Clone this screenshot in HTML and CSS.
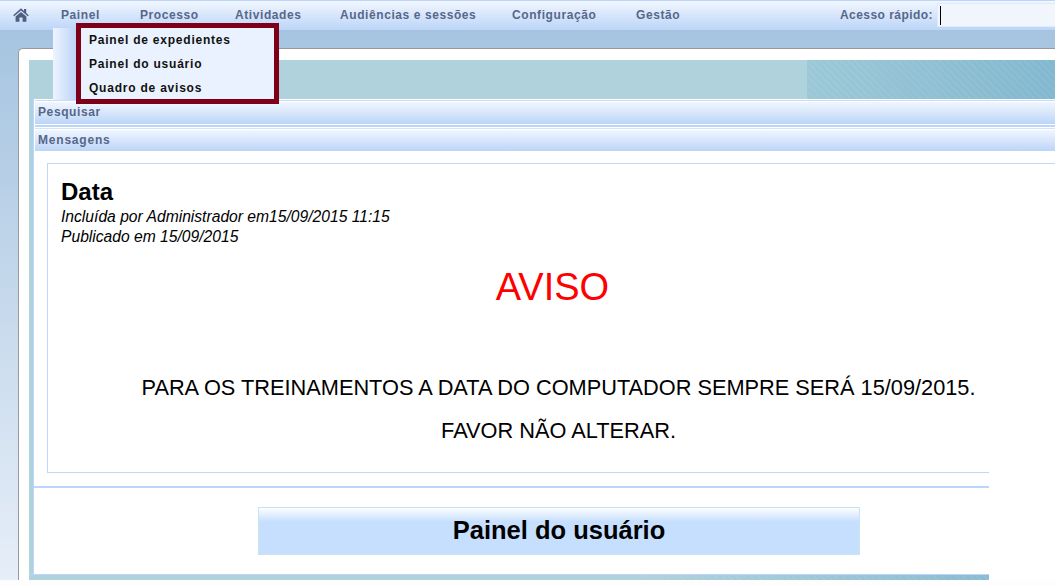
FILE: index.html
```html
<!DOCTYPE html>
<html lang="pt-BR">
<head>
<meta charset="utf-8">
<title>Painel do usuário</title>
<link rel="stylesheet" href="styles.css">
</head>
<body>
<nav class="topbar">
  <a class="home" aria-label="Início">
    <svg viewBox="0 0 16 14" width="16" height="14"><path d="M8 0.3 0.2 7.2 1.2 8.3 8 2.4 14.8 8.3 15.8 7.2 13.2 4.9V1H11V3L8 0.3ZM2.6 8.6V13.7H6.4V9.6H9.6V13.7H13.4V8.6L8 3.9 2.6 8.6Z" fill="#4f5f80"/></svg>
  </a>
  <ul class="menu">
    <li class="m-painel">Painel</li>
    <li class="m-processo">Processo</li>
    <li class="m-atividades">Atividades</li>
    <li class="m-audiencias">Audiências e sessões</li>
    <li class="m-config">Configuração</li>
    <li class="m-gestao">Gestão</li>
  </ul>
  <div class="quick">
    <label class="quick-label">Acesso rápido:</label>
    <div class="quick-input"><span class="caret"></span></div>
  </div>
</nav>

<div class="dropdown">
  <div class="dropdown-side"></div>
  <ul class="dropdown-list">
    <li>Painel de expedientes</li>
    <li>Painel do usuário</li>
    <li>Quadro de avisos</li>
  </ul>
</div>

<main class="stage">
  <div class="frame">
    <div class="teal">
      <div class="banner"><div class="banner-pattern"></div></div>
      <div class="panel-head head-search">Pesquisar</div>
      <div class="panel-head head-msg">Mensagens</div>
      <div class="content">
        <section class="notice">
          <h1 class="notice-title">Data</h1>
          <p class="notice-meta">Incluída por Administrador em15/09/2015 11:15</p>
          <p class="notice-meta">Publicado em 15/09/2015</p>
          <p class="aviso">AVISO</p>
          <p class="line line-1">PARA OS TREINAMENTOS A DATA DO COMPUTADOR SEMPRE SERÁ 15/09/2015.</p>
          <p class="line line-2">FAVOR NÃO ALTERAR.</p>
        </section>
        <div class="rule"></div>
        <div class="title-wrap"><h2 class="page-title">Painel do usuário</h2></div>
      </div>
      <div class="foot-strip"><div class="foot-pattern"></div></div>
    </div>
  </div>
</main>
</body>
</html>
```
FILE: styles.css
```css
* { box-sizing: border-box; }
html, body { margin: 0; padding: 0; }
body {
  width: 1055px;
  height: 586px;
  overflow: hidden;
  position: relative;
  background: #fdfdfd;
  font-family: "Liberation Sans", Arial, sans-serif;
}
ul { list-style: none; margin: 0; padding: 0; }
p, h1, h2 { margin: 0; }

.topbar {
  height: 30px;
  display: flex;
  align-items: center;
  border-top: 1px solid #bcd6fb;
  background: linear-gradient(#f1f6fe, #bcd5f8);
  position: relative;
}
.home { width: 61px; padding-left: 13px; display: flex; margin-top: -2px; }
.menu {
  display: flex;
  font-size: 12px;
  font-weight: bold;
  letter-spacing: 0.58px;
  color: #56678a;
  margin-top: -2px;
}
.menu li { white-space: nowrap; }
.m-painel { width: 79px; }
.m-processo { width: 95px; }
.m-atividades { width: 105px; }
.m-audiencias { width: 172px; }
.m-config { width: 124px; }
.m-gestao { width: 60px; }
.quick { margin-left: auto; display: flex; align-items: center; margin-top: -2px; }
.quick-label {
  font-size: 12px;
  font-weight: bold;
  letter-spacing: 0.45px;
  color: #56678a;
  margin-right: 4px;
}
.quick-input {
  width: 118px;
  height: 24px;
  margin-top: 1px;
  background: #f0f6fc;
  border: 1px solid #dfeafa;
  border-right: 0;
  padding: 2px 0 0 2px;
}
.caret { display: block; width: 1px; height: 19px; background: #000; }

.dropdown {
  position: absolute;
  left: 53px;
  top: 23px;
  display: flex;
  align-items: flex-start;
  z-index: 5;
}
.dropdown-side {
  width: 23px;
  height: 72px;
  margin-top: 5px;
  background: linear-gradient(90deg, #eef4fe, #bcd5f8);
}
.dropdown-list {
  width: 203px;
  height: 81px;
  border: 5px solid #7e0018;
  background: #e9f2fe;
  font-size: 12px;
  font-weight: bold;
  letter-spacing: 0.78px;
  color: #111;
  padding: 5px 0 0 8px;
}
.dropdown-list li { height: 24px; line-height: 15px; }

.stage {
  height: 550px;
  padding: 18px 0 0 18px;
  background: linear-gradient(#a6c4e0, #e6eef8);
}
.frame {
  height: 532px;
  width: 1037px;
  background: #fff;
  border-top: 1px solid #999;
  border-left: 1px solid #999;
  border-top-left-radius: 5px;
  padding: 11px 0 0 10px;
}
.teal {
  width: 1026px;
  height: 520px;
  background: linear-gradient(90deg, #b0d2dc 4px, #bcd6fb 4px 5px, #fff 5px);
  padding-left: 5px;
}
.banner {
  height: 39px;
  margin-left: -5px;
  display: flex;
  justify-content: flex-end;
  background: #b0d2dc;
}
.banner-pattern {
  width: 248px;
  height: 39px;
  background:
    repeating-linear-gradient(45deg, rgba(255,255,255,0.05) 0 2px, rgba(255,255,255,0) 2px 5px),
    linear-gradient(90deg, #9cc8d6, #82b8d0);
}
.panel-head {
  border-left: 1px solid #fff;
  font-size: 12px;
  font-weight: bold;
  letter-spacing: 0.6px;
  color: #56678a;
  padding-left: 3px;
  line-height: 15px;
}
.head-search {
  height: 25px;
  margin-top: 1px;
  padding-top: 5px;
  background: linear-gradient(#c6dcfa 0 1px, #fff 1px 2px, #f1f6fe 2px, #bcd5f8 24px, #fff 24px);
}
.head-msg {
  height: 26px;
  padding-top: 8px;
  letter-spacing: 0.8px;
  background: linear-gradient(#bcd6fb 0 2px, #fff 2px 3px, #d2e2fa 3px 4px, #fff 4px 5px, #f1f6fe 5px, #bcd5f8 100%);
}

.content {
  width: 1021px;
  height: 423px;
  padding-top: 12px;
}
.notice {
  width: 1008px;
  height: 310px;
  margin-left: 13px;
  border-top: 1px solid #c0d8f8;
  border-left: 1px solid #c0d8f8;
  padding: 15px 0 0 13px;
  position: relative;
  color: #000;
}
.notice::after {
  content: "";
  position: absolute;
  left: -1px;
  bottom: 0;
  width: 942px;
  height: 1px;
  background: #c0d8f8;
}
.notice-title { font-size: 24px; font-weight: bold; line-height: 26px; margin-bottom: 2px; }
.notice-meta { font-size: 15.65px; font-style: italic; line-height: 20px; }
.aviso {
  font-size: 38px;
  color: #ff0000;
  line-height: 44px;
  margin-top: 18px;
  width: 983px;
  text-align: center;
}
.line {
  font-size: 21.75px;
  line-height: 24px;
  text-align: center;
  width: 995px;
}
.line-1 { margin-top: 67px; }
.line-2 { margin-top: 19px; }
.rule { height: 2px; width: 955px; background: #bcd6fb; margin-top: 13px; }
.title-wrap {
  width: 955px;
  display: flex;
  padding: 19px 0 0 224px;
}
.page-title {
  width: 602px;
  height: 48px;
  border: 1px solid #c8e4ee;
  background: linear-gradient(#fdfeff 0, #c6dffe 14px);
  font-size: 25.5px;
  font-weight: bold;
  line-height: 44px;
  text-align: center;
  color: #000;
}
.foot-strip {
  width: 960px;
  height: 6px;
  margin-left: -5px;
  border-top: 1px solid #bcd6fb;
  background: #b0d2dc;
  display: flex;
  justify-content: flex-end;
}
.foot-pattern {
  width: 349px;
  background:
    repeating-linear-gradient(45deg, rgba(255,255,255,0.05) 0 2px, rgba(255,255,255,0) 2px 5px),
    linear-gradient(90deg, #b0d2dc, #8abbd2);
}
```
